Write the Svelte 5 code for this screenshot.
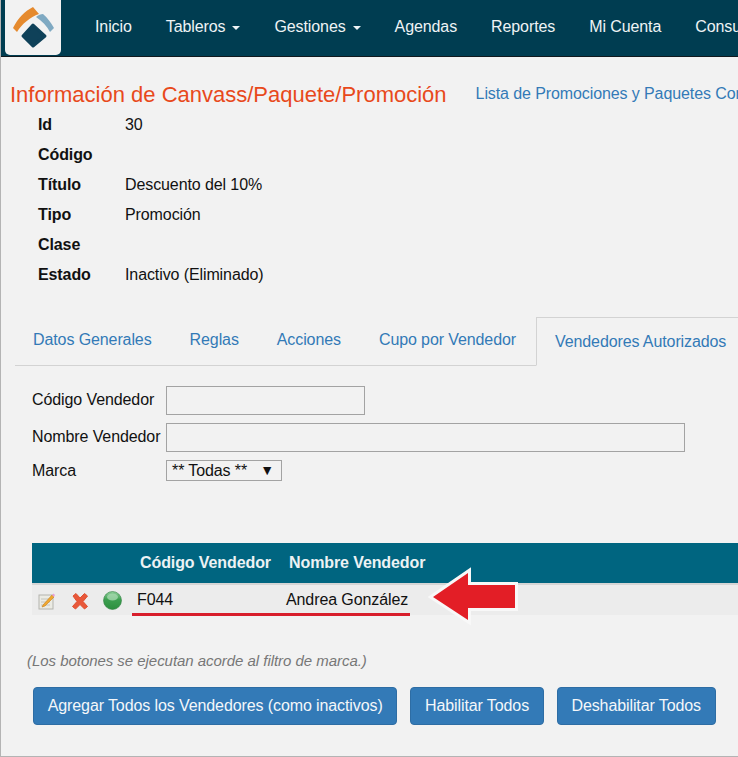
<script>
  const nav = [
    { t: 'Inicio' }, { t: 'Tableros', c: true }, { t: 'Gestiones', c: true },
    { t: 'Agendas' }, { t: 'Reportes' }, { t: 'Mi Cuenta' }, { t: 'Consultas' }
  ];
  const info = [
    ['Id', '30'], ['Código', ''], ['Título', 'Descuento del 10%'],
    ['Tipo', 'Promoción'], ['Clase', ''], ['Estado', 'Inactivo (Eliminado)']
  ];
  const tabs = ['Datos Generales', 'Reglas', 'Acciones', 'Cupo por Vendedor'];
</script>

<div class="page">
  <nav class="nav">
    <div class="logo">
      <svg width="56" height="55" viewBox="0 0 56 55">
        <path d="M8 28 C13 18 20 11 28 7 L34 14 C25 17 17 24 12 32 Z" fill="#e58a2e"/>
        <path d="M31 17 C33 15 36 14 38 14 C43 18 46 23 49 28 L45 32 C42 26 37 21 31 17 Z" fill="#7fa9c2"/>
        <path d="M28 25 L40 36 L28 46 L18 36 Z" fill="#0f4159" stroke="#0f4159" stroke-width="3" stroke-linejoin="round"/>
      </svg>
    </div>
    <ul class="menu">
      {#each nav as n}
        <li>{n.t}{#if n.c}<span class="caret"></span>{/if}</li>
      {/each}
    </ul>
  </nav>

  <div class="heading">
    <h1>Información de Canvass/Paquete/Promoción</h1>
    <a href="#lista">Lista de Promociones y Paquetes Comerciales</a>
  </div>

  <dl class="info">
    {#each info as [k, v]}
      <div class="info-row"><dt>{k}</dt><dd>{v}</dd></div>
    {/each}
  </dl>

  <div class="tabs">
    {#each tabs as t}<a class="tab" href="#tab">{t}</a>{/each}
    <a class="tab active" href="#tab">Vendedores Autorizados</a>
  </div>

  <form class="filters">
    <div class="f-row"><span class="lbl">Código Vendedor</span><input class="short" /></div>
    <div class="f-row"><span class="lbl">Nombre Vendedor</span><input class="long" /></div>
    <div class="f-row sel"><span class="lbl">Marca</span><div class="select">** Todas **<span class="arrow">▼</span></div></div>
  </form>

  <div class="table">
    <div class="thead">
      <span class="c1">Código Vendedor</span><span>Nombre Vendedor</span>
    </div>
    <div class="trow">
      <div class="icons">
        <svg width="18" height="18" viewBox="0 0 18 18">
          <rect x="1" y="3" width="14" height="14" fill="#ebebe4" stroke="#b4b4ae"/>
          <path d="M3 7h9M3 10h9M3 13h9" stroke="#c4c4bc"/>
          <path d="M5 13 L14 3 L16 5 L7 14 L4 15 Z" fill="#f0a830" stroke="#c77f18" stroke-width=".6"/>
          <path d="M14 3 L15.5 1.5 L17 3 L16 5 Z" fill="#e6a0d8"/>
        </svg>
        <svg class="x" width="18" height="18" viewBox="0 0 18 18">
          <path d="M2 4 L5 1.5 L9 6 L13.5 1.5 L16.5 4 L12 9.5 L16.5 14.5 L13.5 17 L9 12.5 L4.5 17 L1.5 14.5 L6 9.5 Z" fill="#e8583a" stroke="#e0502f" stroke-linejoin="round"/>
        </svg>
        <svg class="ball" width="19" height="19" viewBox="0 0 19 19">
          <defs>
            <linearGradient id="g" x1="0" y1="0" x2="0" y2="1">
              <stop offset="0" stop-color="#8fd09a"/>
              <stop offset=".45" stop-color="#3c9f50"/>
              <stop offset="1" stop-color="#2c8f3e"/>
            </linearGradient>
          </defs>
          <circle cx="9.5" cy="9.5" r="9" fill="url(#g)" stroke="#2f7f3f" stroke-width=".6"/>
          <ellipse cx="9.5" cy="6" rx="5.5" ry="3.5" fill="#a5d8ae" opacity=".8"/>
        </svg>
      </div>
      <span class="code">F044</span><span>Andrea González</span>
    </div>
    <div class="underline"></div>
    <svg class="pointer" width="94" height="62" viewBox="0 0 94 62">
      <path d="M6 33 L41 9 L41 21 L88 21 L88 44 L41 44 L41 56 Z" fill="#e31e26" stroke="#f8f8f8" stroke-width="6" paint-order="stroke"/>
    </svg>
  </div>

  <p class="note">(Los botones se ejecutan acorde al filtro de marca.)</p>

  <div class="buttons">
    <button>Agregar Todos los Vendedores (como inactivos)</button>
    <button>Habilitar Todos</button>
    <button>Deshabilitar Todos</button>
  </div>
</div>

<style>
  :global(body) { margin: 0; background: #f2f2f2; }
  .page {
    width: 738px; height: 757px; box-sizing: border-box; overflow: hidden;
    border-left: 1px solid #b4b4b4; border-bottom: 1px solid #b4b4b4;
    background: #f2f2f2; color: #111;
    font: 16px/22px "Liberation Sans", Arial, sans-serif;
    letter-spacing: -0.1px;
  }
  .nav {
    height: 57px; box-sizing: border-box; background: #003d51;
    border-bottom: 1px solid #10191e; display: flex; margin-left: -1px;
  }
  .logo {
    width: 56px; height: 55px; margin-left: 5px; flex: none;
    background: #f2f2f2; border-radius: 0 0 5px 5px; border: 0;
  }
  .logo svg { display: block; }
  .menu {
    list-style: none; display: flex; margin: 0 0 0 17px; padding: 0;
    color: #eef3f5; white-space: nowrap;
  }
  .menu li { padding: 16px 17px 0; }
  .caret {
    display: inline-block; margin-left: 7px; vertical-align: middle;
    border-top: 4px solid #eef3f5; border-left: 4px solid transparent; border-right: 4px solid transparent;
  }
  .heading {
    display: flex; align-items: flex-start; white-space: nowrap;
    padding: 24px 0 0 9px; height: 29px;
  }
  h1 {
    margin: 0; font-size: 22px; line-height: 28px; font-weight: 400; color: #e8491b; letter-spacing: 0;
  }
  .heading a { margin: 2px 0 0 29px; color: #337ab7; text-decoration: none; }
  .info { margin: 0; padding: 0 0 0 37px; }
  .info-row { display: flex; height: 30px; line-height: 30px; }
  dt { width: 87px; font-weight: 700; font-size: 16px; }
  dd { margin: 0; }
  .tabs {
    display: flex; margin: 27px 0 0 14px; height: 49px; box-sizing: border-box;
    border-bottom: 1px solid #d3d3d3; white-space: nowrap;
  }
  .tab {
    color: #337ab7; text-decoration: none; padding: 12px 19px 0;
  }
  .tab:first-child { padding-left: 18px; }
  .tab.active {
    height: 49px; box-sizing: border-box; flex: none; margin-left: 1px;
    padding: 13px 19px 0 18px; border: 1px solid #d3d3d3; border-bottom-color: #f2f2f2; margin-right: -40px; background: #f2f2f2;
  }
  .filters { padding: 20px 0 0 31px; }
  .f-row { display: flex; height: 29px; margin-bottom: 8px; }
  .f-row.sel { height: 21px; margin: 0; }
  .lbl { width: 134px; flex: none; line-height: 28px; white-space: nowrap; }
  .sel .lbl { line-height: 22px; }
  input {
    box-sizing: border-box; height: 29px; padding: 0; background: #f2f2f2;
    border: 1px solid #a3a3a3; border-radius: 0; outline: 0;
  }
  .short { width: 199px; }
  .long { width: 519px; }
  .select {
    box-sizing: border-box; width: 116px; height: 21px; border: 1px solid #a3a3a3;
    padding-left: 5px; line-height: 19px; position: relative; color: #111;
  }
  .arrow { position: absolute; right: 7px; top: 0; font-size: 14px; }
  .table { position: relative; margin: 62px 0 0 31px; }
  .thead {
    height: 42px; box-sizing: border-box; background: #006580; border-bottom: 2px solid #d5d5d5;
    color: #ecf2f4; font-weight: 700; line-height: 40px; display: flex; white-space: nowrap;
  }
  .thead .c1 { margin-left: 108px; width: 149px; }
  .trow {
    height: 30px; background: #ececec; display: flex; align-items: center; white-space: nowrap;
  }
  .icons { display: flex; align-items: center; width: 105px; flex: none; margin-top: 1px; padding-left: 6px; box-sizing: border-box; }
  .icons .x { margin-left: 15px; }
  .icons .ball { margin-left: 14px; }
  .code { width: 149px; }
  .underline {
    position: absolute; left: 100px; top: 70px; width: 278px; height: 3px; background: #d81e2c;
  }
  .pointer { position: absolute; left: 395px; top: 21px; overflow: visible; }
  .note {
    margin: 36px 0 0 26px; font-size: 15px; line-height: 20px; font-style: italic; color: #777; white-space: nowrap; letter-spacing: -0.04px;
  }
  .buttons { display: flex; gap: 13px; margin: 16px 0 0 32px; }
  button {
    height: 38px; padding: 0 13.7px; background: #337ab7; color: #f4f7fa;
    border: 1px solid #2e6da4; border-radius: 4px; letter-spacing: -0.1px;
    font: 16px "Liberation Sans", Arial, sans-serif; white-space: nowrap;
  }
</style>
